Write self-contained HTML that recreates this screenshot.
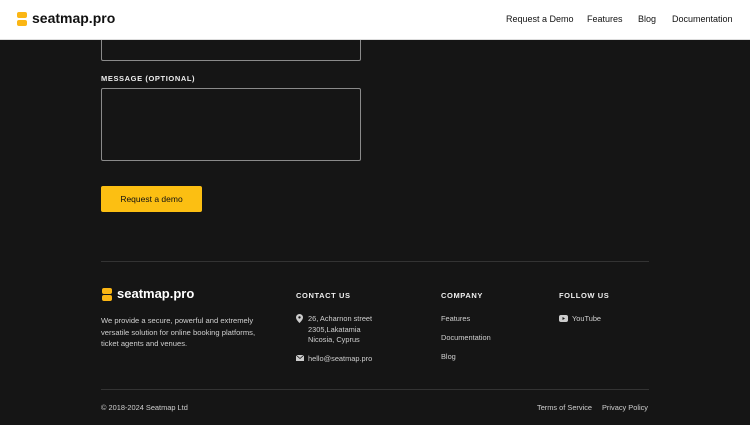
<!DOCTYPE html>
<html><head><style>
*{margin:0;padding:0;box-sizing:border-box}
body{width:750px;height:425px;background:#151515;font-family:"Liberation Sans",sans-serif;position:relative;overflow:hidden;color:#ddd}
.hdr{position:absolute;left:0;top:0;width:750px;height:40px;background:#fff;border-bottom:1px solid #ddd;z-index:2}
.a{position:absolute;white-space:nowrap}
.logo{position:absolute}
.logo i{position:absolute;background:#fbb614;border-radius:2px;width:10px;height:6px}
.nav{font-size:9px;color:#111;top:14px}
.box{position:absolute;border:1px solid #8a8a8a;border-radius:2px}
.lbl{font-size:7.5px;font-weight:bold;letter-spacing:.6px;color:#eee}
.t{font-size:7.4px;color:#cfcfcf}
.line{position:absolute;left:101px;width:548px;height:1px;background:#333}
</style></head><body>
<div class="hdr">
 <div class="logo" style="left:17px;top:12px"><i style="left:0;top:0"></i><i style="left:0;top:8px"></i></div>
 <div class="a" style="left:32px;top:10px;font-size:14px;font-weight:bold;color:#111">seatmap.pro</div>
 <div class="a nav" style="left:506px">Request a Demo</div>
 <div class="a nav" style="left:587px">Features</div>
 <div class="a nav" style="left:638px">Blog</div>
 <div class="a nav" style="left:672px">Documentation</div>
</div>
<div class="box" style="left:101px;top:20px;width:260px;height:41px"></div>
<div class="a lbl" style="left:101px;top:74px">MESSAGE (OPTIONAL)</div>
<div class="box" style="left:101px;top:88px;width:260px;height:73px"></div>
<div class="a" style="left:101px;top:186px;width:101px;height:26px;background:#fcbf12;border-radius:2px;color:#111;font-size:8.5px;text-align:center;line-height:26px">Request a demo</div>
<div class="line" style="top:261px"></div>
<div class="logo" style="left:102px;top:288px"><i style="left:0;top:0"></i><i style="left:0;top:7px"></i></div>
<div class="a" style="left:117px;top:286px;font-size:13px;font-weight:bold;color:#fff">seatmap.pro</div>
<div class="a t" style="left:101px;top:315px;line-height:11.5px;font-size:7.6px">We provide a secure, powerful and extremely<br>versatile solution for online booking platforms,<br>ticket agents and venues.</div>
<div class="a lbl" style="left:296px;top:291px">CONTACT US</div>
<svg class="a" style="left:296px;top:314px" width="7" height="9" viewBox="0 0 7 9"><path d="M3.5 0C1.6 0 0 1.5 0 3.4 0 6 3.5 9 3.5 9S7 6 7 3.4C7 1.5 5.4 0 3.5 0z" fill="#ccc"/><circle cx="3.5" cy="3.4" r="1.2" fill="#151515"/></svg>
<div class="a t" style="left:308px;top:314px;line-height:10.5px">26, Acharnon street<br>2305,Lakatamia<br>Nicosia, Cyprus</div>
<svg class="a" style="left:296px;top:355px" width="8" height="6" viewBox="0 0 8 6"><rect width="8" height="6" fill="#ccc"/><path d="M0 0L4 3.5 8 0" stroke="#151515" fill="none" stroke-width=".8"/></svg>
<div class="a t" style="left:308px;top:354px">hello@seatmap.pro</div>
<div class="a lbl" style="left:441px;top:291px">COMPANY</div>
<div class="a t" style="left:441px;top:314px">Features</div>
<div class="a t" style="left:441px;top:333px">Documentation</div>
<div class="a t" style="left:441px;top:352px">Blog</div>
<div class="a lbl" style="left:559px;top:291px">FOLLOW US</div>
<svg class="a" style="left:559px;top:315px" width="9" height="7" viewBox="0 0 9 7"><rect width="9" height="7" rx="2" fill="#ccc"/><path d="M3.5 2L6 3.5 3.5 5z" fill="#151515"/></svg>
<div class="a t" style="left:572px;top:314px">YouTube</div>
<div class="line" style="top:389px"></div>
<div class="a t" style="left:101px;top:403px">© 2018-2024 Seatmap Ltd</div>
<div class="a t" style="left:537px;top:403px">Terms of Service</div>
<div class="a t" style="left:602px;top:403px">Privacy Policy</div>
</body></html>
